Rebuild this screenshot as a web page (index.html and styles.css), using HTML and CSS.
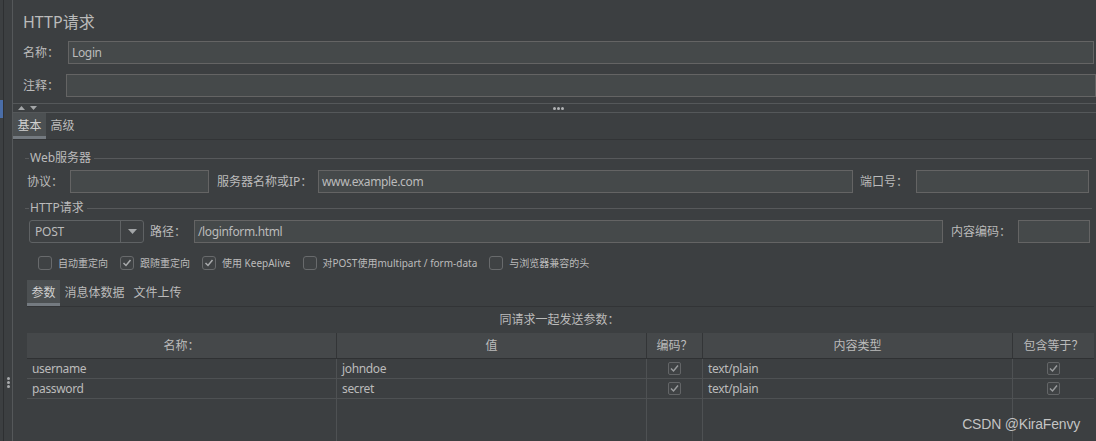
FILE: index.html
```html
<!DOCTYPE html>
<html lang="zh-CN">
<head>
<meta charset="utf-8">
<title>HTTP请求</title>
<link rel="stylesheet" href="styles.css">
</head>
<body>
<div class="app">
  <aside class="gutter">
    <div class="gutter-rail"><div class="gutter-mark"></div></div>
    <div class="gutter-grip"><span></span><span></span><span></span></div>
  </aside>

  <main class="main">
    <section class="header">
      <h1 class="title">HTTP请求</h1>
      <div class="field-row">
        <span class="field-label">名称：</span>
        <div class="input">Login</div>
      </div>
      <div class="field-row field-row--comment">
        <span class="field-label field-label--narrow">注释：</span>
        <div class="input"></div>
      </div>
    </section>

    <div class="splitter">
      <div class="splitter-arrows">
        <svg width="7" height="4" viewBox="0 0 7 4"><path d="M0 4 L3.5 0 L7 4Z" fill="#a3a6a8"/></svg>
        <svg width="7" height="4" viewBox="0 0 7 4"><path d="M0 0 L7 0 L3.5 4Z" fill="#a3a6a8"/></svg>
      </div>
      <div class="splitter-grip"><span></span><span></span><span></span></div>
      <div></div>
    </div>

    <nav class="tabs">
      <span class="tab tab--active">基本</span>
      <span class="tab">高级</span>
    </nav>

    <section class="content">
      <div class="group-title"><span>Web服务器</span></div>
      <div class="row row--server">
        <span class="lbl lbl--proto">协议：</span>
        <div class="input input--proto"></div>
        <span class="lbl lbl--host">服务器名称或IP：</span>
        <div class="input input--grow">www.example.com</div>
        <span class="lbl lbl--port">端口号：</span>
        <div class="input input--port"></div>
      </div>

      <div class="group-title group-title--http"><span>HTTP请求</span></div>
      <div class="row row--request">
        <div class="combo">
          <div class="combo-value">POST</div>
          <div class="combo-arrow">
            <svg width="9" height="5" viewBox="0 0 9 5"><path d="M0 0 H9 L4.5 5Z" fill="#a3a6a8"/></svg>
          </div>
        </div>
        <span class="lbl lbl--path">路径：</span>
        <div class="input input--grow">/loginform.html</div>
        <span class="lbl lbl--enc">内容编码：</span>
        <div class="input input--enc"></div>
      </div>

      <div class="checks">
        <label class="check"><span class="cb"></span>自动重定向</label>
        <label class="check"><span class="cb"><svg width="12" height="12" viewBox="0 0 12 12"><polyline points="2.5,6 5,8.5 9.5,3" fill="none" stroke="#a9abad" stroke-width="1.5"/></svg></span>跟随重定向</label>
        <label class="check"><span class="cb"><svg width="12" height="12" viewBox="0 0 12 12"><polyline points="2.5,6 5,8.5 9.5,3" fill="none" stroke="#a9abad" stroke-width="1.5"/></svg></span>使用 KeepAlive</label>
        <label class="check"><span class="cb"></span>对POST使用multipart / form-data</label>
        <label class="check"><span class="cb"></span>与浏览器兼容的头</label>
      </div>

      <nav class="subtabs">
        <span class="tab tab--active">参数</span>
        <span class="tab">消息体数据</span>
        <span class="tab">文件上传</span>
      </nav>

      <div class="caption">同请求一起发送参数：</div>

      <div class="ptable" role="table">
        <div class="th" role="columnheader">名称：</div>
        <div class="th" role="columnheader">值</div>
        <div class="th" role="columnheader">编码？</div>
        <div class="th" role="columnheader">内容类型</div>
        <div class="th th--last" role="columnheader">包含等于？</div>

        <div class="td" role="cell">username</div>
        <div class="td" role="cell">johndoe</div>
        <div class="td td--center" role="cell"><span class="tcb"><svg width="11" height="11" viewBox="0 0 11 11"><polyline points="2,5.5 4.5,8 9,2.5" fill="none" stroke="#9a9c9e" stroke-width="1.4"/></svg></span></div>
        <div class="td" role="cell">text/plain</div>
        <div class="td td--center td--last" role="cell"><span class="tcb"><svg width="11" height="11" viewBox="0 0 11 11"><polyline points="2,5.5 4.5,8 9,2.5" fill="none" stroke="#9a9c9e" stroke-width="1.4"/></svg></span></div>

        <div class="td" role="cell">password</div>
        <div class="td" role="cell">secret</div>
        <div class="td td--center" role="cell"><span class="tcb"><svg width="11" height="11" viewBox="0 0 11 11"><polyline points="2,5.5 4.5,8 9,2.5" fill="none" stroke="#9a9c9e" stroke-width="1.4"/></svg></span></div>
        <div class="td" role="cell">text/plain</div>
        <div class="td td--center td--last" role="cell"><span class="tcb"><svg width="11" height="11" viewBox="0 0 11 11"><polyline points="2,5.5 4.5,8 9,2.5" fill="none" stroke="#9a9c9e" stroke-width="1.4"/></svg></span></div>

        <div class="tf"></div>
        <div class="tf"></div>
        <div class="tf"></div>
        <div class="tf"></div>
        <div class="tf tf--last"></div>
      </div>
    </section>
  </main>

  <div class="watermark">CSDN @KiraFenvy</div>
</div>
</body>
</html>
```

FILE: styles.css
```css
* { box-sizing: border-box; }

html, body {
  margin: 0;
  padding: 0;
}

body {
  width: 1096px;
  height: 441px;
  overflow: hidden;
  background: #3c3f41;
  color: #bbbbbb;
  font-family: "Noto Sans", "Noto Sans CJK SC", sans-serif;
  font-size: 12px;
  line-height: 16px;
}

.app {
  position: relative;
  display: flex;
  height: 441px;
  overflow: hidden;
}

/* left gutter */
.gutter {
  display: flex;
  flex: none;
  height: 100%;
}
.gutter-rail {
  width: 4px;
  border-right: 1px solid #2e3032;
}
.gutter-mark {
  margin-top: 100px;
  width: 3px;
  height: 18px;
  background: #4a6da7;
}
.gutter-grip {
  width: 9px;
  border-right: 1px solid #55585a;
  display: flex;
  flex-direction: column;
  align-items: center;
  gap: 1px;
  padding-top: 377px;
}
.gutter-grip span {
  width: 3px;
  height: 3px;
  border-radius: 50%;
  background: #a8aaac;
}

/* main */
.main {
  flex: 1;
  min-width: 0;
  display: flex;
  flex-direction: column;
  overflow: hidden;
}
.main > * {
  flex: none;
}

.header {
  padding: 12px 2px 0 10px;
}
.title {
  margin: 0;
  height: 20px;
  font-size: 16px;
  line-height: 20px;
  font-weight: normal;
  color: #bbbbbb;
}
.field-row {
  display: flex;
  align-items: center;
  height: 23px;
  margin-top: 9px;
}
.field-row--comment {
  margin-top: 10px;
  margin-right: -2px;
}
.field-label {
  flex: none;
  width: 45px;
}
.field-label--narrow {
  width: 43px;
}

.input {
  height: 23px;
  background: #45494a;
  border: 1px solid #646464;
  padding: 0 3px;
  display: flex;
  align-items: center;
  color: #bbbbbb;
  white-space: nowrap;
  letter-spacing: -0.35px;
}
.field-row .input { flex: 1; }

/* splitter */
.splitter {
  margin-top: 6px;
  height: 10px;
  border-top: 1px solid #55585a;
  border-bottom: 1px solid #55585a;
  display: grid;
  grid-template-columns: 1fr auto 1fr;
  align-items: center;
}
.splitter-arrows {
  display: flex;
  gap: 5px;
  padding-left: 5px;
}
.splitter-grip {
  display: flex;
  gap: 1px;
  padding-left: 8px;
}
.splitter-grip span {
  width: 3px;
  height: 3px;
  border-radius: 50%;
  background: #b0b2b4;
}

/* tabs */
.tabs,
.subtabs {
  display: flex;
  flex: none;
  height: 27px;
  border-bottom: 1px solid #323436;
}
.tab {
  display: flex;
  align-items: center;
  padding: 0 4.5px;
  height: 26px;
  font-size: 12px;
  color: #bbbbbb;
}
.tab--active {
  background: #4c5052;
  box-shadow: inset 0 -3px 0 #747a80;
  color: #d0d0d0;
}

/* content */
.content {
  padding: 0 2px 0 12px;
  display: flex;
  flex-direction: column;
}
.content > * {
  flex: none;
}

.group-title {
  display: flex;
  align-items: center;
  height: 14px;
  margin-top: 11px;
}
.group-title--http {
  margin-top: 8px;
}
.group-title::before {
  content: "";
  width: 4px;
  height: 1px;
  background: #57595b;
}
.group-title::after {
  content: "";
  flex: 1;
  height: 1px;
  margin-right: 2px;
  background: #57595b;
}
.group-title span {
  padding: 0 3px 0 1px;
  line-height: 14px;
}

.row {
  display: flex;
  align-items: center;
  height: 23px;
  margin-top: 5px;
}
.row--server {
  margin-left: 2px;
  margin-right: 5px;
}
.row--request {
  margin-left: 4px;
  margin-right: 4px;
}
.lbl {
  flex: none;
  white-space: nowrap;
}
.lbl--proto { width: 43px; }
.lbl--host  { width: 101px; margin-left: 8px; }
.lbl--port  { width: 56px; margin-left: 7px; }
.lbl--path  { width: 44px; margin-left: 6px; }
.lbl--enc   { width: 67px; margin-left: 8px; }

.input--proto { flex: none; width: 139px; }
.input--grow  { flex: 1; min-width: 0; }
.input--port  { flex: none; width: 173px; }
.input--enc   { flex: none; width: 72px; }

.combo {
  flex: none;
  width: 115px;
  height: 23px;
  display: flex;
  border: 1px solid #5f6264;
  border-radius: 3px;
  background: #3e4143;
}
.combo-value {
  width: 91px;
  padding-left: 5px;
  display: flex;
  align-items: center;
  border-right: 1px solid #5f6264;
  letter-spacing: -0.2px;
}
.combo-arrow {
  flex: 1;
  display: flex;
  align-items: center;
  justify-content: center;
}

/* checkboxes */
.checks {
  display: flex;
  align-items: center;
  gap: 12px;
  height: 14px;
  margin-top: 13px;
  padding-left: 13px;
}
.check {
  display: flex;
  align-items: center;
  gap: 6px;
  font-size: 10px;
  line-height: 14px;
  color: #bbbbbb;
  white-space: nowrap;
}
.cb {
  width: 14px;
  height: 14px;
  flex: none;
  border: 1px solid #686a6c;
  border-radius: 3px;
  background: #3f4244;
  display: flex;
  align-items: center;
  justify-content: center;
}

/* sub tabs */
.subtabs {
  margin-top: 10px;
  margin-left: 2px;
}

.caption {
  height: 26px;
  display: flex;
  align-items: center;
  justify-content: center;
}

/* parameters table */
.ptable {
  margin-left: 2px;
  display: grid;
  grid-template-columns: 310px 310px 56px 310px 81px;
  grid-template-rows: 26px 20px 20px 60px;
}
.th {
  background: #45484a;
  border-right: 1px solid #333537;
  border-bottom: 1px solid #2f3133;
  display: flex;
  align-items: center;
  justify-content: center;
}
.th--last { border-right: none; }
.td {
  border-right: 1px solid #4e5153;
  border-bottom: 1px solid #4e5153;
  padding: 0 5px;
  display: flex;
  align-items: center;
  white-space: nowrap;
  letter-spacing: -0.35px;
}
.td--center { justify-content: center; padding: 0; }
.td--last { border-right: none; }
.tf { border-right: 1px solid #4e5153; }
.tf--last { border-right: none; }

.tcb {
  width: 13px;
  height: 13px;
  border: 1px solid #636567;
  border-radius: 2px;
  background: #3f4244;
  display: flex;
  align-items: center;
  justify-content: center;
}

/* watermark overlay */
.watermark {
  position: absolute;
  right: 16px;
  bottom: 9px;
  font-family: "Liberation Sans", Arial, sans-serif;
  font-size: 14px;
  line-height: 16px;
  letter-spacing: -0.2px;
  color: rgba(222, 222, 222, 0.85);
}
```
